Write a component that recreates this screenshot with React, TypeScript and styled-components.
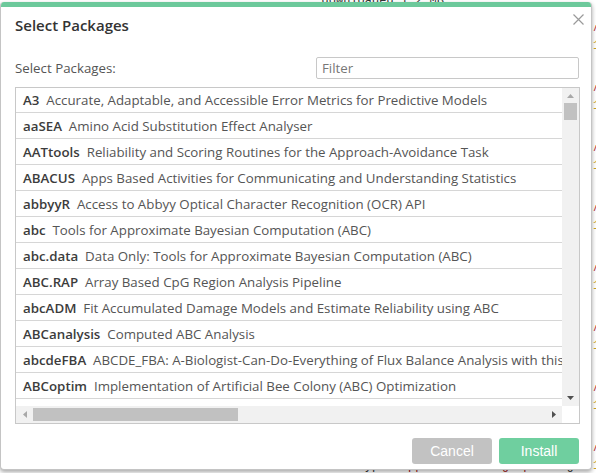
import React from "react";
import styled, { createGlobalStyle } from "styled-components";

const Global = createGlobalStyle`
  html, body { margin: 0; padding: 0; background: #fff; }
  body { width: 596px; height: 473px; overflow: hidden; font-family: "Open Sans", "Noto Sans", sans-serif; }
  * { box-sizing: border-box; }
`;

const Page = styled.div`
  position: relative;
  width: 596px;
  height: 473px;
  overflow: hidden;
  background: #fff;
`;

const Editor = styled.div`
  display: flex;
  flex-direction: column;
  margin-top: -6px;
  font-family: "Liberation Mono", monospace;
  font-size: 12px;
  line-height: 15px;
  color: #333;
`;

const CodeLine = styled.div`
  display: grid;
  grid-template-columns: 592px 1fr;
  height: 15px;
  white-space: pre;
`;

const CodeText = styled.span`
  padding-left: 300px;
  overflow: hidden;
`;

const Marker = styled.span<{ $tone: "red" | "yellow" | "none" }>`
  color: ${(p) => (p.$tone === "red" ? "#b22222" : p.$tone === "yellow" ? "#c9a227" : "transparent")};
  padding-left: 1px;
`;

const Str = styled.span`
  color: #a31515;
`;

const Dialog = styled.div`
  position: absolute;
  top: 2px;
  left: 0;
  width: 592px;
  height: 468px;
  background: #fff;
  border: 1px solid #c4c4c4;
  border-top: none;
  border-radius: 4px;
  box-shadow: 0 2px 4px rgba(0, 0, 0, 0.35);
  display: flex;
  flex-direction: column;
  overflow: hidden;
`;

const TopBar = styled.div`
  height: 5px;
  background: #6cc99b;
  margin: 0 -1px;
  flex: none;
`;

const Header = styled.div`
  display: flex;
  justify-content: space-between;
  align-items: flex-start;
  padding: 6px 7px 0 14px;
  height: 28px;
  flex: none;
`;

const Title = styled.h1`
  margin: 2px 0 0 0;
  font-size: 15px;
  line-height: 20px;
  font-weight: 600;
  color: #333;
`;

const Close = styled.button`
  border: none;
  background: none;
  padding: 0;
  margin-top: 1px;
  width: 11px;
  height: 11px;
  display: flex;
  cursor: pointer;
`;

const Body = styled.div`
  display: flex;
  flex-direction: column;
  padding: 0 12px 0 14px;
  margin-top: 22px;
`;

const FieldRow = styled.div`
  display: flex;
  justify-content: space-between;
  align-items: center;
  height: 22px;
`;

const Label = styled.label`
  font-size: 13.3px;
  color: #555;
`;

const FilterInput = styled.input`
  width: 263px;
  height: 22px;
  border: 1px solid #c8c8c8;
  border-radius: 2px;
  padding: 0 5px;
  font-family: "Open Sans", sans-serif;
  font-size: 13.3px;
  color: #333;
  outline: none;
  &::placeholder { color: #777; }
`;

const ListBox = styled.div`
  margin-top: 8px;
  width: 565px;
  height: 337px;
  border: 1px solid #c8c8c8;
  display: grid;
  grid-template-columns: 546px 17px;
  grid-template-rows: 318px 17px;
`;

const Viewport = styled.div`
  overflow: hidden;
`;

const Rows = styled.div`
  width: 1364px;
  display: flex;
  flex-direction: column;
`;

const Row = styled.div`
  height: 26px;
  flex: none;
  border-bottom: 1px solid #d6d6d6;
  display: flex;
  align-items: center;
  padding-left: 7px;
  font-size: 13.3px;
  white-space: pre;
  color: #555;
  &:first-child { height: 25px; }
`;

const PkgName = styled.span`
  font-weight: 600;
  color: #3c3c3c;
`;

const VScroll = styled.div`
  background: #f1f1f1;
  display: flex;
  flex-direction: column;
  align-items: center;
`;

const HScroll = styled.div`
  background: #f1f1f1;
  display: flex;
  align-items: center;
`;

const Corner = styled.div`
  background: #fff;
`;

const ArrowBox = styled.div<{ $size: number }>`
  width: ${(p) => p.$size}px;
  height: ${(p) => p.$size}px;
  display: flex;
  align-items: center;
  justify-content: center;
  flex: none;
`;

const VThumb = styled.div`
  width: 13px;
  height: 17px;
  background: #c1c1c1;
`;

const Spacer = styled.div`
  flex: 1;
`;

const HThumb = styled.div`
  height: 13px;
  width: 205px;
  background: #c1c1c1;
`;

const Footer = styled.div`
  display: flex;
  justify-content: flex-end;
  gap: 7px;
  padding: 0 12px 0 14px;
  margin-top: 14px;
`;

const Button = styled.button<{ $kind: "cancel" | "install" }>`
  width: 80px;
  height: 26px;
  border: none;
  border-radius: 3px;
  background: ${(p) => (p.$kind === "cancel" ? "#c2c2c2" : "#6fcf9f")};
  color: #fff;
  font-family: "Liberation Sans", Arial, sans-serif;
  font-size: 14px;
  cursor: pointer;
`;

const packages: [string, string][] = [
  ["A3", "Accurate, Adaptable, and Accessible Error Metrics for Predictive Models"],
  ["aaSEA", "Amino Acid Substitution Effect Analyser"],
  ["AATtools", "Reliability and Scoring Routines for the Approach-Avoidance Task"],
  ["ABACUS", "Apps Based Activities for Communicating and Understanding Statistics"],
  ["abbyyR", "Access to Abbyy Optical Character Recognition (OCR) API"],
  ["abc", "Tools for Approximate Bayesian Computation (ABC)"],
  ["abc.data", "Data Only: Tools for Approximate Bayesian Computation (ABC)"],
  ["ABC.RAP", "Array Based CpG Region Analysis Pipeline"],
  ["abcADM", "Fit Accumulated Damage Models and Estimate Reliability using ABC"],
  ["ABCanalysis", "Computed ABC Analysis"],
  ["abcdeFBA", "ABCDE_FBA: A-Biologist-Can-Do-Everything of Flux Balance Analysis with this package"],
  ["ABCoptim", "Implementation of Artificial Bee Colony (ABC) Optimization"],
  ["abcrf", "Approximate Bayesian Computation via Random Forests"],
];

const Tri = ({ dir }: { dir: "up" | "down" | "left" | "right" }) => {
  const pts = {
    up: "0,4 7,4 3.5,0",
    down: "0,0 7,0 3.5,4",
    left: "4,0 4,7 0,3.5",
    right: "0,0 0,7 4,3.5",
  }[dir];
  const w = dir === "up" || dir === "down" ? 7 : 4;
  const h = dir === "up" || dir === "down" ? 4 : 7;
  return (
    <svg width={w} height={h} viewBox={`0 0 ${w} ${h}`}>
      <polygon points={pts} fill={dir === "up" || dir === "left" ? "#a8a8a8" : "#505050"} />
    </svg>
  );
};

const editorLines = Array.from({ length: 33 }, (_, i) => {
  const tone: "red" | "yellow" | "none" = i % 4 === 2 ? "red" : i % 4 === 3 ? "yellow" : "none";
  return { tone, i };
});

export default function App() {
  return (
    <Page>
      <Global />
      <Editor aria-hidden="true">
        {editorLines.map(({ tone, i }) => (
          <CodeLine key={i}>
            <CodeText>
              {i === 0 ? (
                <>{"   downloaded 1.2 MB"}</>
              ) : i === 31 ? (
                <>
                  {"content-type "}
                  <Str>{"'application/x-gzip'"}</Str>
                  {" length"}
                </>
              ) : (
                " "
              )}
            </CodeText>
            <Marker $tone={tone}>{tone === "red" ? "^" : tone === "yellow" ? "1" : " "}</Marker>
          </CodeLine>
        ))}
      </Editor>
      <Dialog role="dialog" aria-label="Select Packages">
        <TopBar />
        <Header>
          <Title>Select Packages</Title>
          <Close aria-label="Close">
            <svg width="11" height="11" viewBox="0 0 11 11">
              <path d="M0.5 0.5 L10.5 10.5 M10.5 0.5 L0.5 10.5" stroke="#9a9a9a" strokeWidth="1.2" />
            </svg>
          </Close>
        </Header>
        <Body>
          <FieldRow>
            <Label>Select Packages:</Label>
            <FilterInput placeholder="Filter" />
          </FieldRow>
          <ListBox>
            <Viewport>
              <Rows>
                {packages.map(([name, desc]) => (
                  <Row key={name}>
                    <PkgName>{name}</PkgName>
                    {"  " + desc}
                  </Row>
                ))}
              </Rows>
            </Viewport>
            <VScroll>
              <ArrowBox $size={15}>
                <Tri dir="up" />
              </ArrowBox>
              <VThumb />
              <Spacer />
              <ArrowBox $size={17}>
                <Tri dir="down" />
              </ArrowBox>
            </VScroll>
            <HScroll>
              <ArrowBox $size={17}>
                <Tri dir="left" />
              </ArrowBox>
              <HThumb />
              <Spacer />
              <ArrowBox $size={17}>
                <Tri dir="right" />
              </ArrowBox>
            </HScroll>
            <Corner />
          </ListBox>
        </Body>
        <Footer>
          <Button $kind="cancel">Cancel</Button>
          <Button $kind="install">Install</Button>
        </Footer>
      </Dialog>
    </Page>
  );
}
